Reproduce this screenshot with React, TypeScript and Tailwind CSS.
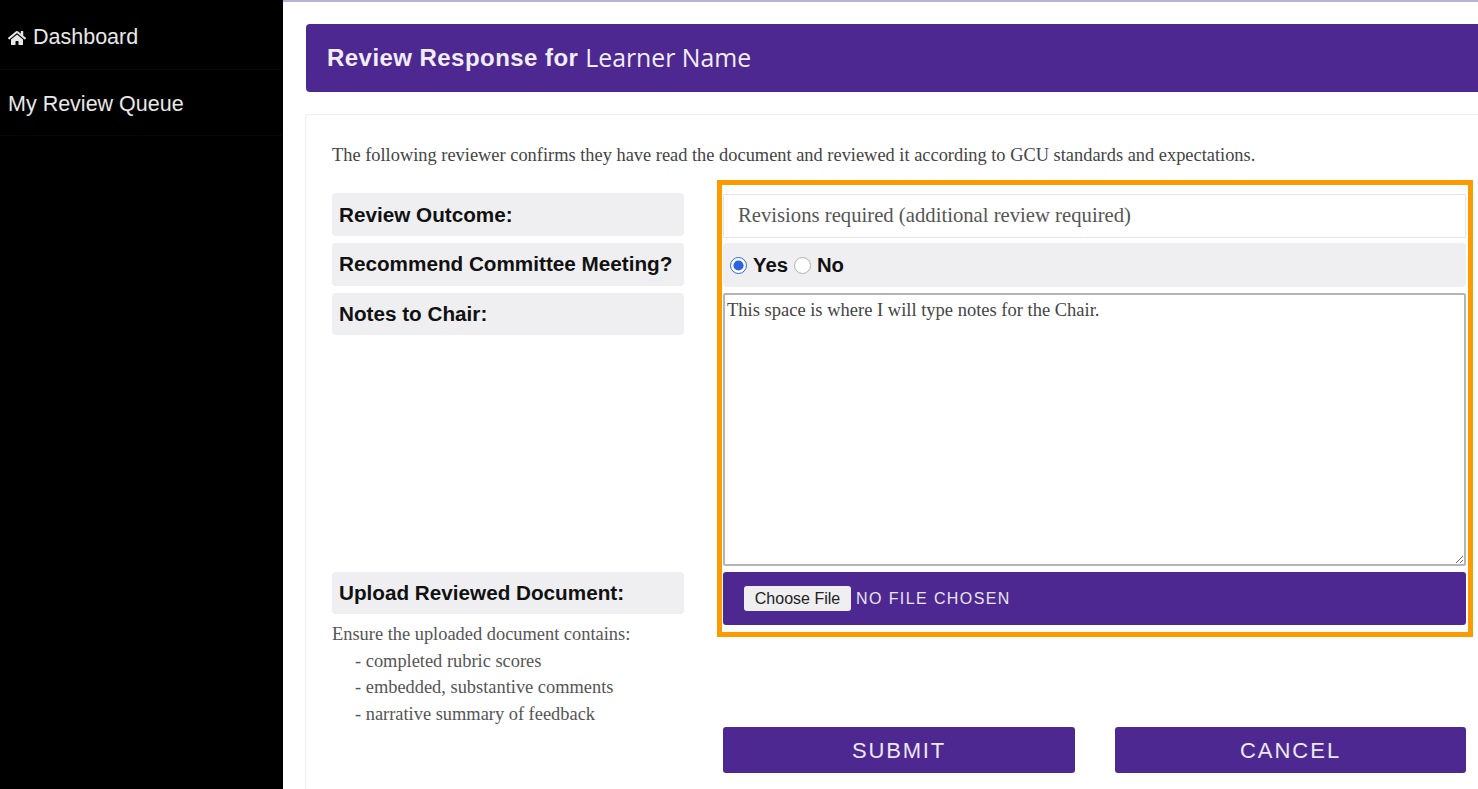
import { FaHome } from 'react-icons/fa'

const serif = "font-['Liberation_Serif',serif]"

function Label({ children, className = '' }: { children: string; className?: string }) {
  return (
    <div className={`flex items-center rounded-[4px] bg-[#efeff1] pl-[7px] text-[20.7px] font-bold text-[#111] ${className}`}>
      {children}
    </div>
  )
}

export default function App() {
  return (
    <div className="flex h-[789px] w-[1478px] overflow-hidden bg-white font-['Liberation_Sans',sans-serif]">
      <aside className="h-full w-[283px] shrink-0 bg-black text-[21.5px] text-[#e8e8e8]">
        <div className="flex h-[70px] items-center gap-[7px] border-b border-[#0d0509] pl-[8px] pt-[6px]">
          <FaHome className="h-[18px] w-[18px]" />
          <span>Dashboard</span>
        </div>
        <div className="flex h-[66px] items-center border-b border-[#0d0509] pl-[8px] pt-[4px]">My Review Queue</div>
      </aside>

      <main className="relative flex-1 border-t-[2px] border-[#b9b1d2] pl-[22px] pt-[22px]">
        <div className="ml-px flex h-[68px] w-[1190px] items-center rounded-[4px] bg-[#4d2890] pl-[21px] text-[24px] text-[#f1edf7]">
          <span className="font-bold tracking-[0.45px]">Review Response for</span>
          <span className="ml-[7px] font-['Open_Sans',sans-serif] text-[24.8px] font-normal">Learner Name</span>
        </div>

        <section className="mt-[22px] w-[1190px] rounded-[4px] border border-[#eeeeee] pb-[60px] pl-[26px] pt-[30px]">
          <p className={`${serif} h-[48px] text-[18.4px] leading-[20px] text-[#444]`}>
            The following reviewer confirms they have read the document and reviewed it according to GCU standards and expectations.
          </p>

          <div className="grid grid-cols-[352px_743px] gap-x-[39px]">
            <div className="flex flex-col">
              <Label className="h-[43px]">Review Outcome:</Label>
              <Label className="mt-[7px] h-[43px] pb-[2px]">Recommend Committee Meeting?</Label>
              <Label className="mt-[7px] h-[42px]">Notes to Chair:</Label>
              <Label className="mt-[237px] h-[42px]">Upload Reviewed Document:</Label>
              <div className={`${serif} mt-[7px] text-[18.4px] leading-[26.5px] text-[#555]`}>
                <p>Ensure the uploaded document contains:</p>
                <p className="pl-[23px]">- completed rubric scores</p>
                <p className="pl-[23px]">- embedded, substantive comments</p>
                <p className="pl-[23px]">- narrative summary of feedback</p>
              </div>
            </div>

            <div className="mt-px flex flex-col">
              <div className={`${serif} flex h-[44px] items-center border border-[#e6e6e6] bg-white pl-[14px] text-[20.7px] text-[#555]`}>
                Revisions required (additional review required)
              </div>
              <div className="mt-[5px] flex h-[44px] items-center rounded-[4px] bg-[#efeff1] pl-[7px] text-[20.3px] font-bold text-[#111]">
                <input type="radio" name="meeting" defaultChecked className="h-[17px] w-[17px] accent-[#2f62e0]" />
                <span className="ml-[6px]">Yes</span>
                <input type="radio" name="meeting" className="ml-[6px] h-[17px] w-[17px] appearance-none rounded-full border border-[#b0b0b4] bg-white" />
                <span className="ml-[6px]">No</span>
              </div>
              <textarea
                defaultValue="This space is where I will type notes for the Chair."
                className={`${serif} mt-[6px] h-[273px] w-full rounded-[2px] border-2 border-[#b5b5b8] bg-white px-[2px] py-[5px] text-[18.5px] leading-[20px] text-[#444] outline-none`}
              />
              <div className="mt-[6px] flex h-[53px] items-center rounded-[3px] bg-[#4d2890] pl-[21px] text-[16px] tracking-[1.4px] text-[#e9e4f2]">
                <button className="h-[25px] w-[107px] rounded-[3px] bg-[#efeff1] text-[16px] tracking-normal text-[#222]">Choose File</button>
                <span className="ml-[5px]">NO FILE CHOSEN</span>
              </div>
              <div className="mt-[102px] flex justify-between">
                <button className="h-[46px] w-[352px] rounded-[3px] bg-[#4d2890] text-[22px] tracking-[1.8px] text-[#ece7f5]">SUBMIT</button>
                <button className="h-[46px] w-[351px] rounded-[3px] bg-[#4d2890] text-[22px] tracking-[2px] text-[#ece7f5]">CANCEL</button>
              </div>
            </div>
          </div>
        </section>

        {/* highlight drawn over the form */}
        <div className="pointer-events-none absolute left-[434px] top-[178px] h-[457px] w-[756px] border-[5px] border-[#fb9b00]" />
      </main>
    </div>
  )
}
